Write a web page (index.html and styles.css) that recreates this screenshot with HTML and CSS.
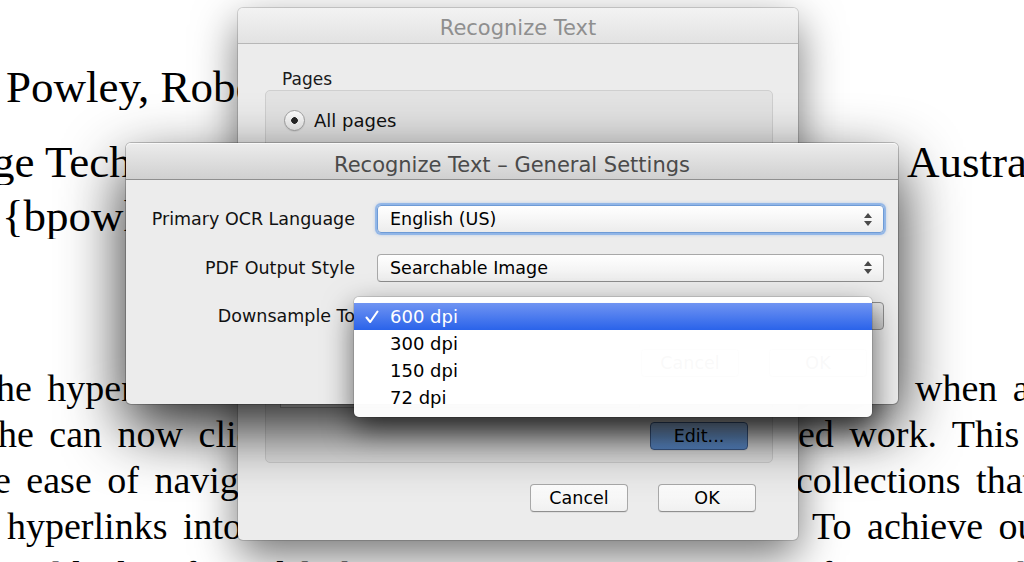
FILE: index.html
```html
<!DOCTYPE html>
<html lang="en">
<head>
<meta charset="utf-8">
<title>Recognize Text</title>
<link rel="stylesheet" href="styles.css">
</head>
<body>
<div class="screen">
  <main class="doc">
    <div class="ln t1"><span class="lt">Powley, Robert Hewitt and</span></div>
    <div class="ln t2"><span class="lt">ge Technology, University of Sydney,</span><span class="rt">Australia</span></div>
    <div class="ln t3"><span class="lt">{bpowley, rhewitt}@it.uts.edu.au</span></div>
    <div class="ln bl b4"><span class="lt">he hyperlinks are generated automatically, so</span><span class="rt">when a</span></div>
    <div class="ln bl b5"><span class="lt">he can now click through to the cit</span><span class="rt">ed work. This</span></div>
    <div class="ln bl b6"><span class="lt">e ease of navigation through the</span><span class="rt">collections that</span></div>
    <div class="ln bl b7"><span class="lt">hyperlinks into the documents</span><span class="rt">To achieve our</span></div>
    <div class="ln bl b8"><span class="lt">could identify and link citations</span><span class="rt">references in the text with</span></div>
  </main>

  <section class="win back">
    <header class="titlebar"><h1 class="title">Recognize Text</h1></header>
    <div class="wbody">
      <div class="glabel">Pages</div>
      <div class="group">
        <div class="radio"><span class="rb"></span><span>All pages</span></div>
        <div class="field"></div>
        <div class="editrow"><button class="btn default">Edit...</button></div>
      </div>
      <div class="btnrow"><button class="btn">Cancel</button><button class="btn">OK</button></div>
    </div>
  </section>

  <section class="win front">
    <header class="titlebar"><h1 class="title">Recognize Text – General Settings</h1></header>
    <div class="fbody">
      <div class="form">
        <label class="flabel">Primary OCR Language</label>
        <div class="popup focus"><span class="pv">English (US)</span><svg class="arrows" width="8" height="13" viewBox="0 0 8 13"><path d="M4 0L8 5H0Z M4 13L8 8H0Z" fill="#4a4a4a"/></svg></div>
        <label class="flabel">PDF Output Style</label>
        <div class="popup"><span class="pv">Searchable Image</span><svg class="arrows" width="8" height="13" viewBox="0 0 8 13"><path d="M4 0L8 5H0Z M4 13L8 8H0Z" fill="#4a4a4a"/></svg></div>
        <label class="flabel">Downsample To</label>
        <div class="popup pressed"><span class="pv">600 dpi</span><svg class="arrows" width="8" height="13" viewBox="0 0 8 13"><path d="M4 0L8 5H0Z M4 13L8 8H0Z" fill="#3a3a3a"/></svg>
          <ul class="menu">
            <li class="mi sel"><span class="ck"><svg width="14" height="14" viewBox="0 0 14 14"><path d="M1.5 7.5L5.2 12L12.5 1.5" fill="none" stroke="#fff" stroke-width="2.1" stroke-linecap="round" stroke-linejoin="round"/></svg></span><span>600 dpi</span></li>
            <li class="mi"><span class="ck"></span><span>300 dpi</span></li>
            <li class="mi"><span class="ck"></span><span>150 dpi</span></li>
            <li class="mi"><span class="ck"></span><span>72 dpi</span></li>
          </ul>
        </div>
      </div>
      <div class="fbtns"><button class="btn">Cancel</button><button class="btn">OK</button></div>
    </div>
  </section>
</div>
</body>
</html>
```

FILE: styles.css
```css
* { box-sizing: border-box; margin: 0; padding: 0; }
html, body { width: 1024px; height: 562px; overflow: hidden; background: #fff; }
body { font-family: "DejaVu Sans", "Liberation Sans", sans-serif; color: #000; }

.screen { position: relative; width: 1024px; height: 562px; overflow: hidden; background: #fff; }

/* ---------- PDF page behind ---------- */
.doc { font-family: "Liberation Serif", "Times New Roman", serif; color: #000; }
.ln { display: flex; white-space: nowrap; }
.lt { flex: none; overflow: hidden; }
.rt { flex: none; }

.t1, .t2, .t3 { font-size: 45px; line-height: 45px; height: 45px; }
.t1 { margin-top: 65px; margin-left: 6px; }
.t2 { margin-top: 30px; margin-left: -8px; }
.t2 .lt { width: 915px; }
.t3 { margin-top: 9px; margin-left: 2px; }

.bl { font-size: 38px; line-height: 46px; height: 46px; word-spacing: 6px; }
.b4 { margin-top: 126px; margin-left: -4px; }
.b4 .lt { width: 919px; }
.b5 { margin-left: -2px; }
.b5 .lt { width: 800px; }
.b6 { margin-left: -6px; }
.b6 .lt { width: 802px; }
.b7 { margin-left: 7px; }
.b7 .lt { width: 805px; }
.b8 { margin-left: -3px; margin-top: 3px; }
.b8 .lt { width: 793px; }

/* ---------- windows ---------- */
.win {
  position: absolute;
  display: flex;
  flex-direction: column;
  background: #ececec;
  border-radius: 5px;
}
.back {
  left: 238px; top: 8px; width: 560px; height: 532px;
  box-shadow: 0 16px 44px rgba(0,0,0,0.55), 0 0 0 1px rgba(0,0,0,0.14);
}
.front {
  left: 126px; top: 143px; width: 772px; height: 261px;
  box-shadow: 0 24px 62px rgba(0,0,0,0.85), 0 0 0 1px rgba(0,0,0,0.22);
}

.titlebar {
  flex: none;
  display: flex;
  align-items: center;
  justify-content: center;
  border-radius: 5px 5px 0 0;
}
.title { font-size: 21px; font-weight: normal; line-height: 24px; }
.back .titlebar {
  height: 36px; padding-top: 5px;
  background: linear-gradient(#f3f3f3, #e2e2e2);
  border-bottom: 1px solid #b7b7b7;
}
.back .title { color: #8f8f8f; }
.front .titlebar {
  height: 37px; padding-top: 7px;
  background: linear-gradient(#ececec, #d0d0d0);
  border-bottom: 1px solid #8f8f8f;
  box-shadow: inset 0 1px 0 #f8f8f8;
}
.front .title { color: #4a4a4a; }

/* back window body */
.wbody { padding: 0 25px 0 27px; display: flex; flex-direction: column; }
.glabel { margin-top: 25px; margin-left: 17px; font-size: 17px; line-height: 20px; color: #1a1a1a; }
.group {
  margin-top: 1px;
  height: 373px;
  background: #e3e3e3;
  border: 1px solid #cfcfcf;
  border-radius: 5px;
  display: flex;
  flex-direction: column;
  padding: 19px 24px 12px 18px;
}
.radio { display: flex; align-items: center; gap: 9px; font-size: 18px; line-height: 21px; color: #111; }
.rb {
  width: 21px; height: 21px; border-radius: 50%;
  border: 1px solid #a3a3a3;
  background: radial-gradient(circle, #262626 0 3px, transparent 3.6px), linear-gradient(#ffffff, #ebebeb);
  box-shadow: 0 1px 1px rgba(0,0,0,0.08);
}
.field {
  margin-top: auto;
  margin-left: -4px;
  width: 360px; height: 24px;
  background: #fff;
  border: 1px solid #b4b4b4;
}
.editrow { margin-top: 14px; display: flex; justify-content: flex-end; }
.btnrow { margin-top: 21px; padding-right: 17px; display: flex; justify-content: flex-end; gap: 30px; }

.btn {
  width: 98px; height: 28px;
  font-family: "DejaVu Sans", "Liberation Sans", sans-serif;
  font-size: 17.5px; line-height: 26px; color: #000;
  background: linear-gradient(#ffffff, #f0f0f0);
  border: 1px solid #a9a9a9;
  border-bottom-color: #8f8f8f;
  border-radius: 4px;
  box-shadow: 0 1px 0 rgba(0,0,0,0.06);
}
.btn.default {
  background: linear-gradient(#a3c4ee, #6f9fdc 50%, #5c8fd3);
  border-color: #3f5f90;
  color: #000;
}

/* front window body */
.fbody { padding: 25px 14px 0 0; display: flex; flex-direction: column; }
.form {
  display: grid;
  grid-template-columns: 229px 507px;
  column-gap: 22px;
  row-gap: 20.5px;
  align-items: center;
}
.flabel { text-align: right; font-size: 17.5px; line-height: 20px; color: #111; }
.popup {
  position: relative;
  height: 28px;
  display: flex;
  align-items: center;
  justify-content: space-between;
  padding: 0 11px 0 12px;
  background: linear-gradient(#ffffff, #f4f4f4 60%, #ececec);
  border: 1px solid #a8a8a8;
  border-bottom-color: #8d8d8d;
  border-radius: 4px;
  font-size: 17.5px; color: #000;
}
.popup.focus {
  border-color: #6e9bd6;
  box-shadow: 0 0 0 2px rgba(126,170,230,0.7), 0 0 3px 2px rgba(126,170,230,0.5);
}
.popup.pressed { background: linear-gradient(#e6e6e6, #c9c9c9); border-color: #8d8d8d; }
.arrows { flex: none; }

.fbtns { margin-top: 19px; padding-right: 17px; display: flex; justify-content: flex-end; gap: 30px; }

/* open pop-up menu */
.menu {
  position: absolute;
  left: -24px; top: -6px;
  width: 518px;
  padding: 6px 0;
  list-style: none;
  background: rgba(255,255,255,0.975);
  border-radius: 5px;
  box-shadow: 0 12px 30px rgba(0,0,0,0.6), 0 0 0 1px rgba(0,0,0,0.12);
  z-index: 2;
}
.mi {
  height: 27px;
  display: flex;
  align-items: center;
  padding-left: 11px;
  font-size: 18px;
  color: #000;
}
.mi .ck { flex: none; width: 25px; display: flex; align-items: center; }
.mi.sel { background: linear-gradient(#7094f2, #2a63ea); color: #fff; }
```
